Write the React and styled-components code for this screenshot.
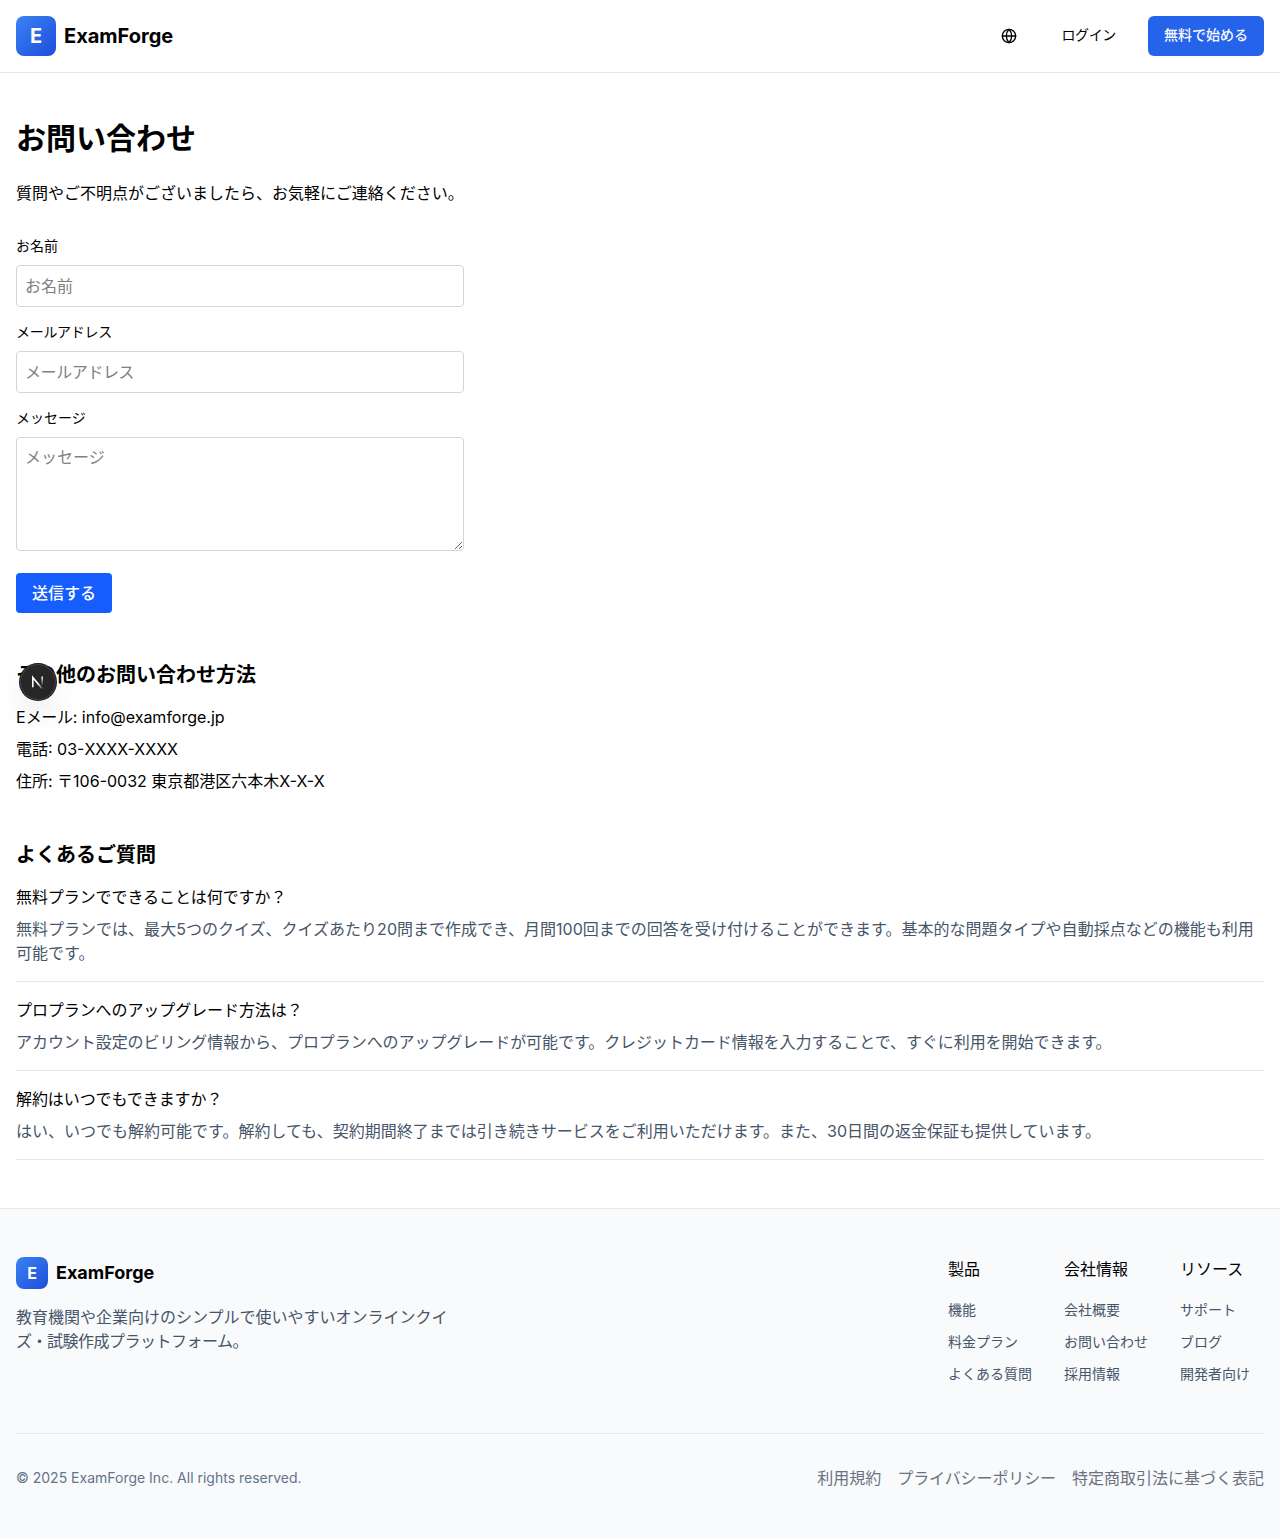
import React from 'react';
import styled, { createGlobalStyle, css } from 'styled-components';
import { Globe } from 'lucide-react';

const GlobalStyle = createGlobalStyle`
  *, *::before, *::after { box-sizing: border-box; }
  body {
    margin: 0;
    background: #fff;
    color: #000;
    font-family: Inter, "Noto Sans CJK JP", sans-serif;
    font-size: 16px;
    line-height: 24px;
    -webkit-font-smoothing: antialiased;
  }
  h1, h2, h3, p, ul { margin: 0; padding: 0; }
  ul { list-style: none; }
  a { color: inherit; text-decoration: none; }
  button, input, textarea { font: inherit; letter-spacing: inherit; }
`;

const Tracked = styled.span`
  letter-spacing: ${(p) => p.$track || 0}px;
`;

const Header = styled.header`
  display: flex;
  align-items: center;
  justify-content: space-between;
  height: 73px;
  padding: 0 16px;
  border-bottom: 1px solid #e2e8f0;
`;

const Brand = styled.div`
  display: flex;
  align-items: center;
  gap: 8px;
  font-weight: 700;
  font-size: ${(p) => (p.$small ? 18 : 20)}px;
  line-height: 28px;
`;

const BrandMark = styled.div`
  display: flex;
  align-items: center;
  justify-content: center;
  width: ${(p) => (p.$small ? 32 : 40)}px;
  height: ${(p) => (p.$small ? 32 : 40)}px;
  border-radius: 8px;
  background: linear-gradient(to bottom right, #3b82f6, #1d4ed8);
  color: #fff;
  font-size: ${(p) => (p.$small ? 16 : 20)}px;
`;

const Actions = styled.div`
  display: flex;
  align-items: center;
  gap: 16px;
`;

const HeaderButton = styled.button`
  display: inline-flex;
  align-items: center;
  justify-content: center;
  height: 40px;
  padding: 0 16px 2px;
  border: 0;
  border-radius: 6px;
  background: transparent;
  color: #000;
  font-size: 14px;
  line-height: 20px;
  font-weight: 400;
  white-space: nowrap;
  ${(p) => p.$icon && css`width: 40px; padding: 0;`}
  ${(p) => p.$primary && css`background: #2563eb; color: #f8fafc; font-weight: 500;`}
`;

const Main = styled.main`
  padding: 48px 16px;
`;

const Title = styled.h1`
  font-size: 30px;
  line-height: 34px;
  font-weight: 700;
  margin-bottom: 26px;
`;

const Form = styled.form`
  display: flex;
  flex-direction: column;
  align-items: flex-start;
  gap: 16px;
  width: 448px;
  margin-top: 32px;
`;

const Field = styled.div`
  width: 100%;
  padding-bottom: ${(p) => p.$tail || 0}px;
`;

const Label = styled.label`
  display: block;
  margin-bottom: 10px;
  font-size: 14px;
  line-height: 18px;
  letter-spacing: ${(p) => p.$track || 0}px;
`;

const control = css`
  display: block;
  width: 100%;
  padding: 8px;
  border: 1px solid #d1d5dc;
  border-radius: 4px;
  background: transparent;
  &::placeholder { color: #808080; opacity: 1; }
`;

const Input = styled.input`
  ${control}
  height: 42px;
  letter-spacing: ${(p) => p.$track || 0}px;
`;

const TextArea = styled.textarea`
  ${control}
  height: 114px;
  padding-top: 7px;
  resize: vertical;
`;

const Submit = styled.button`
  height: 40px;
  padding: 0 16px;
  border: 0;
  border-radius: 4px;
  background: #155dfc;
  color: #fff;
  font-weight: 500;
`;

const Section = styled.section`
  margin-top: 48px;
`;

const SectionTitle = styled.h2`
  margin-bottom: 16px;
  font-size: 20px;
  line-height: 28px;
  font-weight: 600;
`;

const Stack = styled.div`
  display: flex;
  flex-direction: column;
  gap: ${(p) => p.$gap}px;
`;

const Faq = styled.div`
  padding-bottom: 16px;
  border-bottom: 1px solid #e2e8f0;
`;

const Question = styled.h3`
  margin-bottom: 8px;
  font-size: 16px;
  font-weight: 400;
  letter-spacing: -0.08px;
`;

const Answer = styled.p`
  color: #475569;
  letter-spacing: ${(p) => p.$track || 0}px;
`;

const DevBadge = styled.div`
  position: fixed;
  left: 20px;
  top: 664px;
  display: flex;
  align-items: center;
  justify-content: center;
  width: 36px;
  height: 36px;
  border-radius: 50%;
  background: #262626;
  box-shadow: 0 0 0 1px #171717, inset 0 0 0 1px hsla(0, 0%, 100%, 0.14),
    0 16px 32px -8px rgba(0, 0, 0, 0.24);
`;

const Footer = styled.footer`
  padding: 48px 16px;
  border-top: 1px solid #e2e8f0;
  background: #f8fafc;
`;

const FooterTop = styled.div`
  display: flex;
  justify-content: space-between;
  padding-bottom: 48px;
`;

const FooterIntro = styled.div`
  width: 448px;
`;

const Tagline = styled.p`
  margin-top: 16px;
  color: #475569;
`;

const TaglineRow = styled.span`
  display: block;
  white-space: nowrap;
  letter-spacing: ${(p) => p.$track || 0}px;
`;

const Columns = styled.div`
  display: grid;
  grid-template-columns: repeat(3, 84px);
  column-gap: 32px;
`;

const ColumnTitle = styled.h3`
  margin-bottom: 16px;
  font-size: 16px;
  font-weight: 400;
  white-space: nowrap;
`;

const LinkList = styled.ul`
  display: flex;
  flex-direction: column;
  gap: 8px;
  color: #475569;
`;

const LinkItem = styled.li`
  height: 24px;
`;

const FooterLink = styled.a`
  font-size: 14px;
  line-height: 20px;
  white-space: nowrap;
`;

const FooterBottom = styled.div`
  display: flex;
  align-items: center;
  justify-content: space-between;
  padding-top: 32px;
  border-top: 1px solid #e5e7eb;
  color: #64748b;
`;

const Copyright = styled.p`
  font-size: 14px;
`;

const Legal = styled.nav`
  display: flex;
  gap: 16px;
  color: #6a7282;
`;

const faqs = [
  {
    q: '無料プランでできることは何ですか？',
    a: '無料プランでは、最大5つのクイズ、クイズあたり20問まで作成でき、月間100回までの回答を受け付けることができます。基本的な問題タイプや自動採点などの機能も利用可能です。',
    track: 0.015,
  },
  {
    q: 'プロプランへのアップグレード方法は？',
    a: 'アカウント設定のビリング情報から、プロプランへのアップグレードが可能です。クレジットカード情報を入力することで、すぐに利用を開始できます。',
    track: -0.06,
  },
  {
    q: '解約はいつでもできますか？',
    a: 'はい、いつでも解約可能です。解約しても、契約期間終了までは引き続きサービスをご利用いただけます。また、30日間の返金保証も提供しています。',
    track: 0,
  },
];

const columns = [
  { title: '製品', links: ['機能', '料金プラン', 'よくある質問'] },
  { title: '会社情報', links: ['会社概要', 'お問い合わせ', '採用情報'] },
  { title: 'リソース', links: ['サポート', 'ブログ', '開発者向け'] },
];

const NextMark = () => (
  <svg width="14" height="14" viewBox="0 0 14 14" fill="none">
    <defs>
      <linearGradient id="diagonal" x1="8" y1="8" x2="12.5" y2="14" gradientUnits="userSpaceOnUse">
        <stop stopColor="#fff" />
        <stop offset="1" stopColor="#fff" stopOpacity="0" />
      </linearGradient>
      <linearGradient id="stem" x1="11" y1="1.5" x2="11" y2="10.5" gradientUnits="userSpaceOnUse">
        <stop stopColor="#fff" />
        <stop offset="1" stopColor="#fff" stopOpacity="0" />
      </linearGradient>
    </defs>
    <path d="M1.8 12.2V2.4L11.4 14" stroke="url(#diagonal)" strokeWidth="1.6" />
    <path d="M11.2 1.6V11" stroke="url(#stem)" strokeWidth="1.6" />
  </svg>
);

export default function App() {
  return (
    <>
      <GlobalStyle />
      <Header>
        <Brand>
          <BrandMark>E</BrandMark>
          ExamForge
        </Brand>
        <Actions>
          <HeaderButton $icon aria-label="言語"><Globe size={16} /></HeaderButton>
          <HeaderButton><Tracked $track={-0.35}>ログイン</Tracked></HeaderButton>
          <HeaderButton $primary>無料で始める</HeaderButton>
        </Actions>
      </Header>
      <Main>
        <Title>お問い合わせ</Title>
        <p>質問やご不明点がございましたら、お気軽にご連絡ください。</p>
        <Form>
          <Field>
            <Label>お名前</Label>
            <Input placeholder="お名前" />
          </Field>
          <Field>
            <Label $track={-0.3}>メールアドレス</Label>
            <Input $track={-0.4} placeholder="メールアドレス" />
          </Field>
          <Field $tail={6}>
            <Label>メッセージ</Label>
            <TextArea placeholder="メッセージ" />
          </Field>
          <Submit type="button">送信する</Submit>
        </Form>
        <Section>
          <SectionTitle>その他のお問い合わせ方法</SectionTitle>
          <Stack $gap={8}>
            <p>E<Tracked $track={-0.3}>メール</Tracked>: info@examforge.jp</p>
            <p>電話: 03-XXXX-XXXX</p>
            <p>住所: 〒106-0032 東京都港区六本木X-X-X</p>
          </Stack>
        </Section>
        <Section>
          <SectionTitle>よくあるご質問</SectionTitle>
          <Stack $gap={16}>
            {faqs.map((f) => (
              <Faq key={f.q}>
                <Question>{f.q}</Question>
                <Answer $track={f.track}>{f.a}</Answer>
              </Faq>
            ))}
          </Stack>
        </Section>
      </Main>
      <Footer>
        <FooterTop>
          <FooterIntro>
            <Brand $small>
              <BrandMark $small>E</BrandMark>
              ExamForge
            </Brand>
            <Tagline>
              <TaglineRow>教育機関や企業向けのシンプルで使いやすいオンラインクイ</TaglineRow>
              <TaglineRow $track={-0.5}>ズ・試験作成プラットフォーム。</TaglineRow>
            </Tagline>
          </FooterIntro>
          <Columns>
            {columns.map((c) => (
              <div key={c.title}>
                <ColumnTitle>{c.title}</ColumnTitle>
                <LinkList>
                  {c.links.map((l) => (
                    <LinkItem key={l}><FooterLink href="#">{l}</FooterLink></LinkItem>
                  ))}
                </LinkList>
              </div>
            ))}
          </Columns>
        </FooterTop>
        <FooterBottom>
          <Copyright>© 2025 ExamForge Inc. All rights reserved.</Copyright>
          <Legal>
            <a href="#">利用規約</a>
            <a href="#"><Tracked $track={-0.1}>プライバシーポリシー</Tracked></a>
            <a href="#">特定商取引法に基づく表記</a>
          </Legal>
        </FooterBottom>
      </Footer>
      <DevBadge><NextMark /></DevBadge>
    </>
  );
}
